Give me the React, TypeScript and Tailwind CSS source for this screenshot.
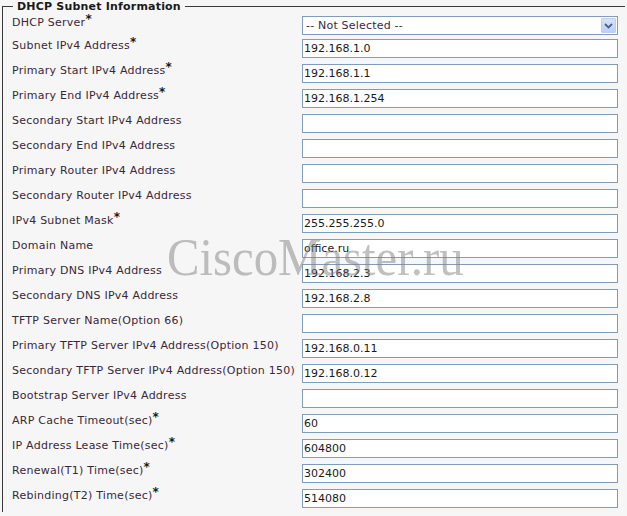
import React from "react";

type Row = { label: string; req: boolean; value?: string; select?: boolean };

const rows: Row[] = [
  { label: "DHCP Server", req: true, select: true },
  { label: "Subnet IPv4 Address", req: true, value: "192.168.1.0" },
  { label: "Primary Start IPv4 Address", req: true, value: "192.168.1.1" },
  { label: "Primary End IPv4 Address", req: true, value: "192.168.1.254" },
  { label: "Secondary Start IPv4 Address", req: false, value: "" },
  { label: "Secondary End IPv4 Address", req: false, value: "" },
  { label: "Primary Router IPv4 Address", req: false, value: "" },
  { label: "Secondary Router IPv4 Address", req: false, value: "" },
  { label: "IPv4 Subnet Mask", req: true, value: "255.255.255.0" },
  { label: "Domain Name", req: false, value: "office.ru" },
  { label: "Primary DNS IPv4 Address", req: false, value: "192.168.2.3" },
  { label: "Secondary DNS IPv4 Address", req: false, value: "192.168.2.8" },
  { label: "TFTP Server Name(Option 66)", req: false, value: "" },
  { label: "Primary TFTP Server IPv4 Address(Option 150)", req: false, value: "192.168.0.11" },
  { label: "Secondary TFTP Server IPv4 Address(Option 150)", req: false, value: "192.168.0.12" },
  { label: "Bootstrap Server IPv4 Address", req: false, value: "" },
  { label: "ARP Cache Timeout(sec)", req: true, value: "60" },
  { label: "IP Address Lease Time(sec)", req: true, value: "604800" },
  { label: "Renewal(T1) Time(sec)", req: true, value: "302400" },
  { label: "Rebinding(T2) Time(sec)", req: true, value: "514080" },
];

function SelectBox() {
  return (
    <div className="mt-[2px] flex h-[19px] w-[316px] items-center justify-between border border-[#7f9db9] bg-white pl-[3px] pr-[1px]">
      <span className="text-[11px] leading-[13px] tracking-[0.2px] text-[#3e1f47]">-- Not Selected --</span>
      <div className="flex h-[15px] w-[15px] items-center justify-center rounded-[1px] border border-[#bccdf3] bg-gradient-to-b from-[#d6e1fb] to-[#bccff7]">
        <svg width="9" height="6" viewBox="0 0 9 6">
          <path d="M1 1 L4.5 4.5 L8 1" fill="none" stroke="#4d6185" strokeWidth="1.8" />
        </svg>
      </div>
    </div>
  );
}

function TextBox({ value }: { value: string }) {
  return (
    <div className="mt-[2px] flex h-[19px] w-[316px] items-center border border-[#7f9db9] bg-white pl-[1px]">
      <span className="text-[11px] leading-[13px] text-[#1a1a1a]">{value}</span>
    </div>
  );
}

export default function App() {
  return (
    <div
      className="relative min-h-screen w-[627px] overflow-hidden bg-[#f6f6f6] text-[11px]"
      style={{ fontFamily: '"DejaVu Sans", Verdana, sans-serif' }}
    >
      <fieldset className="ml-[2px] w-[623px] border-l border-t border-[#3a3a3a]">
        <legend className="ml-[10px] px-[4px] text-[11px] font-bold leading-[13px] tracking-[0.2px] text-[#1a1a1a]">
          DHCP Subnet Information
        </legend>
        <div className="mt-[1px] flex flex-col">
          {rows.map((r, i) => (
            <div
              key={r.label}
              className={`grid grid-cols-[299px_316px] ${i === 0 ? "h-[23px]" : "h-[25px]"}`}
            >
              <div className="whitespace-nowrap pl-[9px] pt-[2px] leading-[13px] tracking-[0.25px] text-[#3a283a]">
                {r.label}
                {r.req && (
                  <span className="relative -top-[3px] text-[12px] font-bold text-[#1a1a1a]">*</span>
                )}
              </div>
              <div>{r.select ? <SelectBox /> : <TextBox value={r.value ?? ""} />}</div>
            </div>
          ))}
        </div>
      </fieldset>
      <div
        className="pointer-events-none absolute left-[167px] top-[231px] origin-left scale-x-[0.92] whitespace-nowrap text-[53px] leading-none text-[rgba(130,130,130,0.5)]"
        style={{ fontFamily: '"Liberation Serif", "Times New Roman", serif' }}
      >
        CiscoMaster.ru
      </div>
    </div>
  );
}
